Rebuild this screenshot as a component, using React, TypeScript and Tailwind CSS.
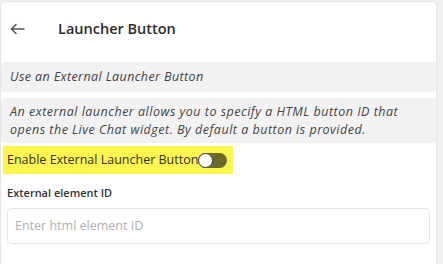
import React from "react";

export default function App() {
  return (
    <div className="w-[443px] h-[264px] bg-[#f1f1f3] pt-px overflow-hidden" style={{ fontFamily: '"Open Sans", "Noto Sans", sans-serif' }}>
      <div className="w-[437px] h-[300px] bg-white border border-[#e4e5e8] rounded-[5px] flex flex-col">
        <div className="flex items-center h-[53px] pl-[9px]">
          <svg width="15" height="12" viewBox="0 0 15 12" fill="none" stroke="#555" strokeWidth="1.6" strokeLinecap="round" strokeLinejoin="round">
            <path d="M14 6H1.5M6 1.5L1.5 6L6 10.5" />
          </svg>
          <span className="ml-[33px] text-[14.5px] font-semibold text-[#2b2b2b]">Launcher Button</span>
        </div>
        <div className="mt-[7px] bg-[#f2f2f2] rounded-[4px] h-[30px] flex items-center px-[9px]">
          <span className="italic text-[12.5px] tracking-[0.4px] text-[#444]">Use an External Launcher Button</span>
        </div>
        <div className="mt-[6px] bg-[#f2f2f2] rounded-[4px] px-[9px] pt-[5px] pb-[4px] italic text-[12.5px] tracking-[0.5px] leading-[18px] text-[#444]">
          An external launcher allows you to specify a HTML button ID that opens the Live Chat widget. By default a button is provided.
        </div>
        <div className="pl-[2px] mt-[3px]">
          <div className="inline-flex items-center bg-[#fdf54f] h-[28px] pl-[4px] pr-[6px]">
            <span className="text-[12.5px] text-[#333]">Enable External Launcher Button</span>
            <div className="w-[29px] h-[15px] rounded-full bg-[#6b6a2c] relative">
              <div className="absolute left-0 top-0 w-[15px] h-[15px] rounded-full bg-white border-[1.5px] border-[#444]" />
            </div>
          </div>
        </div>
        <div className="pl-[6px] mt-[11px] text-[11px] font-semibold text-[#333]">External element ID</div>
        <div className="mx-[6px] mt-[6px] h-[36px] border border-[#e6e6e6] rounded-[4px] flex items-center px-[7px]">
          <span className="text-[12.5px] text-[#b0b0b0]">Enter html element ID</span>
        </div>
      </div>
    </div>
  );
}
